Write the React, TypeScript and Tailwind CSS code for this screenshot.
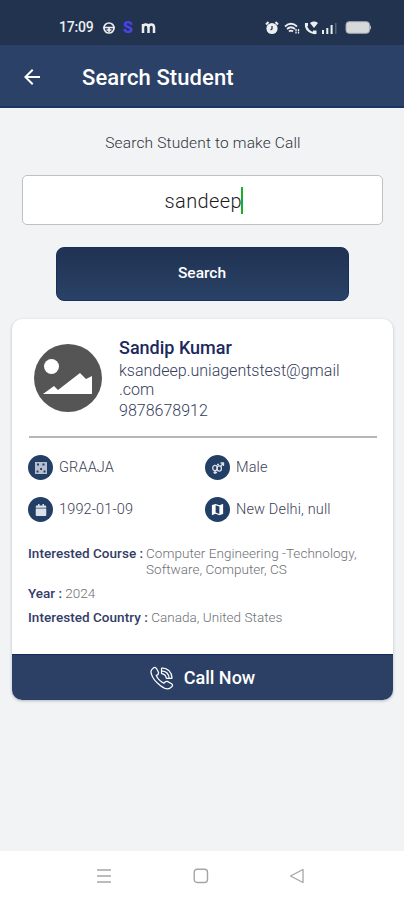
import React, { useState } from "react";
import { FaCalendar } from "react-icons/fa";
import { MdArrowBack, MdMap } from "react-icons/md";

interface Student {
  name: string;
  email: string[];
  phone: string;
  agent: string;
  gender: string;
  dob: string;
  location: string;
  course: string[];
  year: string;
  country: string;
}

const student: Student = {
  name: "Sandip Kumar",
  email: ["ksandeep.uniagentstest@gmail", ".com"],
  phone: "9878678912",
  agent: "GRAAJA",
  gender: "Male",
  dob: "1992-01-09",
  location: "New Delhi, null",
  course: ["Computer Engineering -Technology,", "Software, Computer, CS"],
  year: "2024",
  country: "Canada, United States",
};

const StatusBar: React.FC = () => (
  <div className="flex h-[45px] items-center bg-[#21334e] pt-[10px] pl-[59px] text-[#eceef1]">
    <span className="w-[43px] text-[14px] font-medium tracking-[-0.2px]">17:09</span>
    <svg className="w-[14px] h-[14px]" viewBox="0 0 14 14" fill="none" stroke="currentColor" strokeWidth="1.7">
      <circle cx="7" cy="7" r="5" />
      <path d="M1 6.5h12M4.5 9h5M7 6v5" />
    </svg>
    <span className="ml-[7px] w-[11px] text-[16px] font-black leading-none text-[#4a43e8]">S</span>
    <svg className="ml-[7px] w-[15px] h-[12px]" viewBox="0 0 15 12" fill="none" stroke="currentColor" strokeWidth="2.5">
      <path d="M2 11V2M2 5.500C2 1.500 7.500 1.500 7.500 5.500V11M7.500 5.500C7.500 1.500 13 1.500 13 5.500V11" />
    </svg>
    <div className="ml-[109px] flex items-center">
      <svg className="w-[14px] h-[14px]" viewBox="0 0 14 14">
        <circle cx="7" cy="7.500" r="5.600" fill="currentColor" />
        <path d="M1 3.500L3.500 1M13 3.500L10.500 1" stroke="currentColor" strokeWidth="2" />
        <path d="M7 5v3l-1.500 1" stroke="#21334e" strokeWidth="1.300" fill="none" />
      </svg>
      <svg className="ml-[5px] w-[16px] h-[14px]" viewBox="0 0 16 14" fill="none" stroke="currentColor" strokeWidth="1.700">
        <path d="M1 5.500Q7 0 13 5.500M3 8Q7 4.500 11 8M5 10.500Q7 8.700 9 10.500" />
        <path d="M12 8v4.500M14.500 8v4.500" strokeWidth="1.300" strokeDasharray="2 .6" />
      </svg>
      <svg className="ml-[4px] w-[14px] h-[14px]" viewBox="0 0 14 14">
        <path d="M2 2.500C1.500 8 6 12.500 11.500 12" stroke="currentColor" strokeWidth="2.200" fill="none" />
        <path d="M1 2h3v3H1zM9 9.500h3.500v3.500H9zM6 2Q10 -.8 14 2L10 7z" fill="currentColor" />
      </svg>
      <svg className="ml-[4px] w-[15px] h-[14px]" viewBox="0 0 15 14" fill="currentColor">
        <path d="M0 9h2v4H0zM4.300 7h2v6h-2zM8.600 4h2v9h-2z" />
        <path d="M13 2h1.500v11H13z" opacity=".25" />
      </svg>
      <svg className="ml-[8px] w-[27px] h-[13px]" viewBox="0 0 27 13">
        <rect x="1" y="0.700" width="23.500" height="11.600" rx="3" fill="#d7d8da" stroke="#a2a8b1" />
        <path d="M25 4q2 2.500 0 5z" fill="#cfd2d6" />
      </svg>
    </div>
  </div>
);

const InfoItem: React.FC<{ icon: React.ReactNode; text: string }> = ({ icon, text }) => (
  <div className="flex h-[25px] items-center gap-[6px]">
    <div className="flex h-[25px] w-[25px] items-center justify-center rounded-full bg-[#233f66] text-[#dce2e9]">
      {icon}
    </div>
    <span className="whitespace-nowrap text-[14.5px] font-light tracking-[0.15px] text-[#3c4057]">{text}</span>
  </div>
);

const SearchStudent: React.FC = () => {
  const [query, setQuery] = useState("sandeep");

  return (
    <div className="flex h-[900px] w-[404px] flex-col overflow-hidden bg-[#f1f3f5] font-['Roboto',sans-serif]">
      <StatusBar />
      <header className="flex h-[63px] items-center border-b-2 border-[#1b3265] bg-[#2c4167] pt-[3px] text-white">
        <MdArrowBack className="ml-[20px] h-[24px] w-[24px]" />
        <h1 className="ml-[38px] whitespace-nowrap pt-px text-[22px] font-medium tracking-[0.1px]">Search Student</h1>
      </header>

      <main className="flex flex-1 flex-col items-center">
        <p className="mt-[25px] ml-[2px] h-[20px] text-[15.5px] font-light leading-[20px] tracking-[0.15px] text-[#303337]">Search Student to make Call</p>
        <div className="mt-[22px] flex h-[50px] w-[361px] items-center justify-center rounded-[5px] border border-[#bfc2c1] bg-white pl-[2px]">
          <input
            value={query}
            onChange={(e) => setQuery(e.target.value)}
            className="w-[77px] bg-transparent pt-px pl-px text-[20px] font-light tracking-[0.4px] text-[#1c1c1e] outline-none"
          />
          <span className="h-[27px] w-[2px] bg-[#1cae2b]" />
        </div>
        <button className="mt-[22px] h-[54px] w-[293px] rounded-[8px] border border-[#162f5b] bg-linear-to-b from-[#203252] to-[#294267] text-[15.5px] font-medium text-white">
          Search
        </button>

        <section className="mt-[18px] ml-px flex h-[381px] w-[381px] flex-col overflow-hidden rounded-[10px] bg-white shadow-[0_1px_3px_rgba(40,50,65,0.3)]">
          <div className="flex h-[117px] pl-[22px]">
            <svg className="mt-[25px] h-[68px] w-[68px]" viewBox="0 0 68 68">
              <circle cx="34" cy="34" r="34" fill="#555" />
              <circle cx="17.500" cy="22.500" r="7.500" fill="#fff" />
              <path d="M9 50L20 42L24 46L46 29L52 35L58 32V50z" fill="#fff" />
            </svg>
            <div className="ml-[17px] pt-[18px] text-[16px] font-light text-[#353c5c]">
              <h2 className="h-[23px] text-[18px] font-medium leading-[22px] text-[#1b295d]">{student.name}</h2>
              {student.email.map((line) => (
                <p key={line} className="h-[19px] whitespace-nowrap leading-[21px]">{line}</p>
              ))}
              <p className="mt-[2px] leading-[21px]">{student.phone}</p>
            </div>
          </div>
          <hr className="ml-[17px] w-[348px] border-t-2 border-[#b7b7b7]" />
          <div className="mt-[17px] ml-[16px] grid grid-cols-[177px_1fr] gap-y-[17px]">
            <InfoItem
              text={student.agent}
              icon={
                <svg className="h-[12px] w-[12px]" viewBox="0 0 12 12" fill="currentColor" opacity=".8">
                  <path fillRule="evenodd" d="M0 0h12v12H0zM2 1.500v2h2v-2zM7.500 1.500v2h2v-2zM1.500 8.500v2h2v-2zM5.200 6v2h1.800v-2zM8.500 8.500v2h2v-2z" />
                </svg>
              }
            />
            <InfoItem
              text={student.gender}
              icon={
                <svg className="h-[14px] w-[14px]" viewBox="0 0 14 14" fill="none" stroke="currentColor" strokeWidth="1.300">
                  <ellipse cx="4" cy="7" rx="2.300" ry="2.600" />
                  <ellipse cx="8.200" cy="7.500" rx="2.200" ry="2.600" />
                  <path d="M4 9.500V13M2.500 11.500h3.500M9.500 5.500L12.500 2M9.500 2h3v3M6 3.500h2" />
                </svg>
              }
            />
            <InfoItem text={student.dob} icon={<FaCalendar className="h-[12px] w-[12px]" />} />
            <InfoItem text={student.location} icon={<MdMap className="h-[15px] w-[15px] text-white" />} />
          </div>
          <div className="mt-[23px] ml-[16px] text-[13.5px] font-light leading-[16px] text-[#6d7076]">
            <div className="flex whitespace-nowrap tracking-[0.04px]">
              <b className="w-[118px] font-medium text-[#333c67]">Interested Course :</b>
              <div>
                {student.course.map((line) => (
                  <p key={line}>{line}</p>
                ))}
              </div>
            </div>
            <p className="mt-[8px]"><b className="font-medium text-[#333c67]">Year :</b> {student.year}</p>
            <p className="mt-[8px] tracking-[0.04px]"><b className="font-medium text-[#333c67]">Interested Country :</b> {student.country}</p>
          </div>
          <button className="mt-auto flex h-[46px] w-full items-center justify-center gap-[10px] border-t border-[#14285b] bg-[#2c4065] text-[18px] font-medium text-white">
            <svg className="h-[24px] w-[24px]" viewBox="0 0 25 25" fill="none" stroke="currentColor" strokeWidth="1.300" strokeLinejoin="round">
              <path d="M3 2.500Q6 0 7.500 4L9 7Q9 9 6.500 10Q9 15.500 14.500 18Q16 15.500 18 16L22.500 18.500Q25 20.500 21 23Q17.500 25.500 11 20.500Q3 14.500 1.500 8.500Q0 4.500 3 2.500z" />
              <path d="M12 8Q16.500 8.500 17 13M12 5Q19.500 5.500 20 13M12 2Q22.500 2.500 23 13M12 2v6M17 13h6" />
            </svg>
            Call Now
          </button>
        </section>
      </main>

      <nav className="flex h-[49px] items-center bg-white pl-[96px] text-[#a5a5a5]">
        <svg className="h-[16px] w-[16px]" viewBox="0 0 16 16" stroke="currentColor" strokeWidth="1.500">
          <path d="M1 2h14M1 8h14M1 14h14" />
        </svg>
        <svg className="ml-[81px] h-[16px] w-[16px]" viewBox="0 0 16 16" fill="none" stroke="currentColor" strokeWidth="1.400">
          <rect x="1.200" y="1.200" width="13.300" height="13.300" rx="3" />
        </svg>
        <svg className="ml-[80px] h-[16px] w-[16px]" viewBox="0 0 16 16" fill="none" stroke="currentColor" strokeWidth="1.300" strokeLinejoin="round">
          <path d="M1.500 8L14 1.500v13z" />
        </svg>
      </nav>
    </div>
  );
};

export default SearchStudent;
